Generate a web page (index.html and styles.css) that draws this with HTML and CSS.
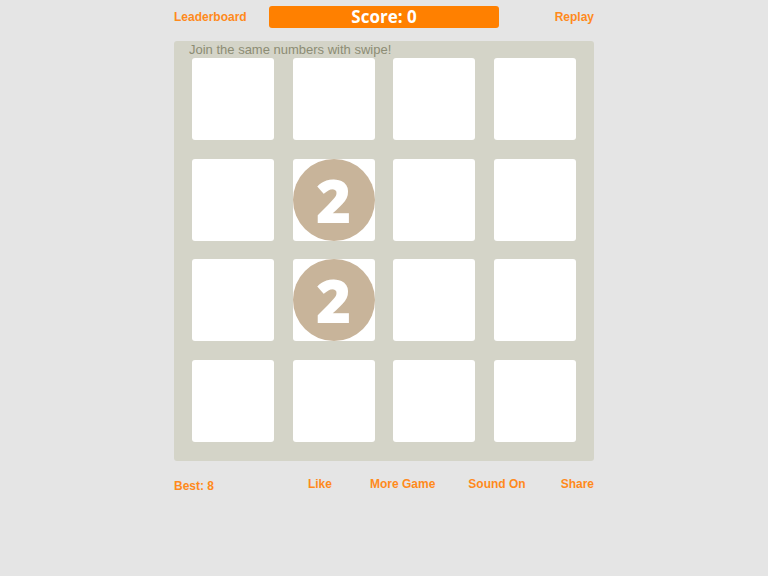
FILE: index.html
```html
<!DOCTYPE html>
<html>
<head>
	<meta charset="UTF-8">
	<title>2048</title>
	<link rel="stylesheet" href="styles.css">
</head>
<body>
	<div class="game">
		<div class="topbar">
			<span class="link">Leaderboard</span>
			<div class="score">Score: 0</div>
			<span class="link replay">Replay</span>
		</div>
		<div class="board">
			<div class="hint">Join the same numbers with swipe!</div>
			<div class="grid">
				<div class="cell"></div><div class="cell"></div><div class="cell"></div><div class="cell"></div>
				<div class="cell"></div><div class="cell"><div class="tile">2</div></div><div class="cell"></div><div class="cell"></div>
				<div class="cell"></div><div class="cell"><div class="tile">2</div></div><div class="cell"></div><div class="cell"></div>
				<div class="cell"></div><div class="cell"></div><div class="cell"></div><div class="cell"></div>
			</div>
		</div>
		<div class="bottombar">
			<span class="link best">Best: 8</span>
			<div class="menu">
				<span class="link">Like</span>
				<span class="link more">More Game</span>
				<span class="link">Sound On</span>
				<span class="link">Share</span>
			</div>
		</div>
	</div>
</body>
</html>
```
FILE: styles.css
```css
body {
	margin : 0;
	background-color : #e5e5e5;
	font-family : "Liberation Sans", Arial, sans-serif;
}
.game {
	width : 420px;
	margin : 0 auto;
	padding-top : 6px;
}
.link {
	color : #ff8a1c;
	font-size : 12px;
	font-weight : bold;
}
.topbar {
	display : grid;
	grid-template-columns : 95px 230px 1fr;
	align-items : center;
	height : 22px;
}
.replay {
	text-align : right;
}
.score {
	height : 22px;
	background-color : #ff8000;
	border-radius : 3px;
	color : white;
	font-family : "Open Sans", sans-serif;
	font-size : 17px;
	font-weight : bold;
	line-height : 22px;
	text-align : center;
}
.board {
	position : relative;
	margin-top : 13px;
	padding : 17px 18px 19px 18px;
	background-color : #d4d4c8;
	border-radius : 3px;
}
.hint {
	position : absolute;
	top : 1px;
	left : 15px;
	color : #8c8c74;
	font-size : 13px;
}
.grid {
	display : grid;
	grid-template-columns : repeat(4, 82px);
	grid-template-rows : repeat(4, 82px);
	column-gap : 18.5px;
	row-gap : 18.5px;
}
.cell {
	background-color : white;
	border-radius : 3px;
}
.tile {
	width : 82px;
	height : 82px;
	border-radius : 50%;
	background-color : #c8b49a;
	color : white;
	font-family : "Open Sans", sans-serif;
	font-size : 60px;
	font-weight : 800;
	line-height : 82px;
	text-align : center;
}
.bottombar {
	display : flex;
	justify-content : space-between;
	margin-top : 16px;
}
.best {
	padding-top : 2px;
}
.menu {
	display : flex;
	gap : 35px;
}
.more {
	margin-left : 3px;
	margin-right : -2px;
}
```
